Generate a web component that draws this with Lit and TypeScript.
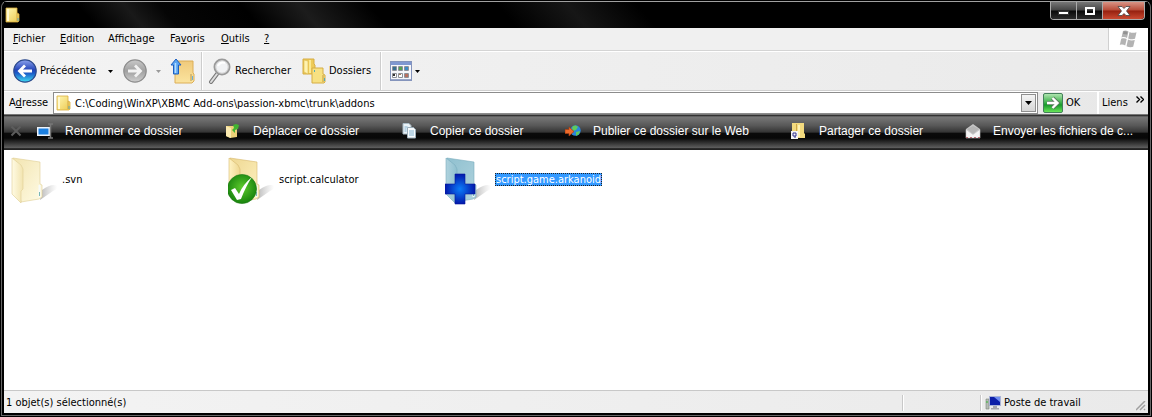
import { LitElement, html, css, svg, type TemplateResult } from "lit";
import { customElement } from "lit/decorators.js";

const folder = (size: number) => html`<svg width=${size} height=${size} viewBox="0 0 16 16" aria-hidden="true">
  <defs><linearGradient id="fy" x1="0" y1="0" x2="1" y2="1"><stop offset="0" stop-color="#fff8b4"/><stop offset="1" stop-color="#ecc94f"/></linearGradient></defs>
  <path d="M1 1h11v5l2 1v7l-1 1H1z" fill="url(#fy)" stroke="#d9ad3c" stroke-width=".8"/>
  <path d="M2 2h2v12H2z" fill="#fff9cf"/><path d="M12 6v8" stroke="#c99b35" stroke-width=".8"/>
  <path d="M13 11v3" stroke="#5aa7b8" stroke-width="1"/></svg>`;

const roundArrow = (dir: "back" | "next") => html`<svg width="24" height="24" viewBox="0 0 24 24" aria-hidden="true">
  <defs>
    <linearGradient id="bk" x1="0" y1="0" x2="0" y2="1"><stop offset="0" stop-color="#8ea4ee"/><stop offset=".45" stop-color="#2445b8"/><stop offset=".6" stop-color="#1b5cc8"/><stop offset="1" stop-color="#3fe0f4"/></linearGradient>
    <linearGradient id="nx" x1="0" y1="0" x2="0" y2="1"><stop offset="0" stop-color="#c9c9c9"/><stop offset=".5" stop-color="#a0a0a0"/><stop offset="1" stop-color="#cfcfcf"/></linearGradient>
  </defs>
  <circle cx="12" cy="12" r="11.2" fill=${dir === "back" ? "url(#bk)" : "url(#nx)"} stroke=${dir === "back" ? "#2d4a8c" : "#8d8d8d"} stroke-width="1.2"/>
  ${dir === "back"
    ? svg`<path d="M19 12H7M12 6.5L6.5 12l5.5 5.5" fill="none" stroke="#fff" stroke-width="2.8"/>`
    : svg`<path d="M5 12h12M12 6.5l5.5 5.5-5.5 5.5" fill="none" stroke="#f2f2f2" stroke-width="2.8"/>`}
</svg>`;

const upIcon = html`<svg width="26" height="26" viewBox="0 0 26 26" aria-hidden="true">
  <defs><linearGradient id="uf" x1="0" y1="0" x2="0" y2="1"><stop offset="0" stop-color="#f0ca7c"/><stop offset="1" stop-color="#fbe49f"/></linearGradient></defs>
  <path d="M5 3h18v12l1 1v7l-2 2H5z" fill="url(#uf)" stroke="#dcae57"/>
  <path d="M21 16v7" stroke="#b69a55"/><path d="M22.500 18v4" stroke="#6bb0d8"/>
  <path d="M6 1l5 6H8.500v9h-5V7H1z" fill="#5aa5f2" stroke="#1d5fc0"/><path d="M5.500 5v10" stroke="#b8defd" stroke-width="1.500"/></svg>`;

const searchIcon = html`<svg width="24" height="26" viewBox="0 0 24 26" aria-hidden="true">
  <path d="M9 16L3 24" stroke="#777" stroke-width="4" stroke-linecap="round"/><path d="M9 16L3 24" stroke="#dedede" stroke-width="2" stroke-linecap="round"/>
  <circle cx="14" cy="9" r="7.500" fill="#e9eaec" stroke="#9a9a9a" stroke-width="2"/>
  <circle cx="14" cy="9" r="6.300" fill="#f1f2f4" stroke="#c9c9c9"/><path d="M10 8c1-3 4-4 7-3" stroke="#fff" stroke-width="2" fill="none"/></svg>`;

const foldersIcon = html`<svg width="24" height="26" viewBox="0 0 24 26" aria-hidden="true">
  <path d="M1 1h11v5l1 1v8l-1 1H1z" fill="#eecb58" stroke="#d6ad45"/><path d="M2 2l4 1v13l-4-2z" fill="#fff3b0" stroke="#dcb94f" stroke-width=".6"/><path d="M8 2v13" stroke="#fbe992" stroke-width="2"/>
  <path d="M10 10h11v6l2 1v7l-1 1H10z" fill="#f7e182" stroke="#d6ad45"/><path d="M21 17v7" stroke="#c59c3b"/><path d="M22.500 20v3M12.500 12v2" stroke="#58aab5"/></svg>`;

const viewsIcon = html`<svg width="22" height="22" viewBox="0 0 22 22" aria-hidden="true">
  <rect x=".5" y="1.500" width="21" height="19" fill="#f6f7fb" stroke="#8494bc"/><path d="M1 2h20v3H1z" fill="#7f97d0"/>
  <path d="M1 19.500h20" stroke="#9aa7c9"/>
  <g fill="#fff" stroke="#8d9098"><path d="M2.500 6.500h4v4h-4zM8.500 6.500h4v4h-4zM14.500 6.500h4v4h-4zM2.500 13.500h4v4h-4zM8.500 13.500h4v4h-4zM14.500 13.500h4v4h-4z"/></g>
  <path d="M3 7h3v3H3z" fill="#386f91"/><path d="M9 7h3v3H9z" fill="#56a052"/><path d="M15 7h3v3h-3z" fill="#3f8ac2"/>
  <path d="M3 14h2v2H3z" fill="#333"/><path d="M9 14h2v1H9z" fill="#a87b5a"/><path d="M15 14h3v3h-3z" fill="#b9705f"/></svg>`;

const flagIcon = html`<svg width="20" height="18" viewBox="0 0 20 18" aria-hidden="true">
  <path d="M4 1c2-1 4-.5 5.500.5L8 8C6.500 7 4.500 6.800 2.500 7.500zM10.500 2c2 1 4 1.200 7 .2L16 8.800c-2 .8-4.500.6-6.800-.4zM2.200 8.800c2-.8 4-.6 5.500.3L6.200 15.500C4.500 14.500 2.800 14.300.8 15zM9 9.600c2 1 4.500 1.200 6.800.4L14.200 16.800c-2.200.8-4.700.4-6.700-.6z" fill="#b3b3b3"/>
  <path d="M4.500 1.500c1-.4 3-.2 4 .5L8 4.500 4 4z" fill="#929292"/></svg>`;

const goIcon = html`<svg width="20" height="20" viewBox="0 0 20 20" aria-hidden="true">
  <defs><linearGradient id="go" x1="0" y1="0" x2="0" y2="1"><stop offset="0" stop-color="#b5e8b4"/><stop offset=".5" stop-color="#35ad45"/><stop offset=".6" stop-color="#17982b"/><stop offset="1" stop-color="#6eea5c"/></linearGradient></defs>
  <rect x=".5" y=".5" width="19" height="19" rx="1.500" fill="url(#go)" stroke="#44805a"/>
  <path d="M4 10h10M9.500 5l5 5-5 5" fill="none" stroke="#58795c" stroke-width="4"/>
  <path d="M4 10h10M9.500 5l5 5-5 5" fill="none" stroke="#fff" stroke-width="2.400"/></svg>`;

const tones = {
  pale: ["#fffbe4", "#f2e4b0", "#dfce94"],
  gold: ["#fff3c4", "#eed791", "#d6b96e"],
  blue: ["#b0d3de", "#8fc0cf", "#7badbd"],
};

const bigFolder = (tone: keyof typeof tones, badge: TemplateResult | unknown) => {
  const [light, mid, edge] = tones[tone];
  return html`<svg width="48" height="50" viewBox="0 0 48 50" aria-hidden="true">
    <defs>
      <linearGradient id="face-${tone}" x1="0" y1="0" x2="1" y2="1"><stop offset="0" stop-color=${mid}/><stop offset="1" stop-color=${light}/></linearGradient>
      <linearGradient id="flap-${tone}" x1="0" y1="0" x2="1" y2="0"><stop offset="0" stop-color=${light}/><stop offset="1" stop-color=${mid}/></linearGradient>
      <linearGradient id="shade" x1="0" y1="0" x2="1" y2="0"><stop offset="0" stop-color="#888" stop-opacity=".6"/><stop offset="1" stop-color="#aaa" stop-opacity="0"/></linearGradient>
      <radialGradient id="ok" cx=".5" cy=".45" r=".6"><stop offset="0" stop-color="#5ecb2d"/><stop offset="1" stop-color="#107c0a"/></radialGradient>
      <radialGradient id="plus" gradientUnits="userSpaceOnUse" cx="15" cy="33" r="16"><stop offset="0" stop-color="#0c7cf8"/><stop offset="1" stop-color="#0212a6"/></radialGradient>
    </defs>
    <path d="M29 44l13-9c3-1 5-3 4-5-3-2-8-1-15 4z" fill="url(#shade)"/>
    <path d="M2 2l27 4v22l2 1v12l-3 2-18 3z" fill="url(#face-${tone})" stroke=${edge} stroke-width=".6"/>
    <path d="M1 2l9 7 2 4v20l-2 2v12l-9-9z" fill="url(#flap-${tone})" stroke=${edge} stroke-width=".6"/>
    <path d="M28.500 29v12" stroke="#f7fbfa" stroke-width="2"/><path d="M28.500 36v4" stroke="#7ab8b5"/>
    ${badge}
  </svg>`;
};

const okBadge = svg`<circle cx="14" cy="33" r="14.600" fill="url(#ok)" stroke="#1d7a14" stroke-width=".6"/>
  <path d="M3 34l4-2 4 6c3-7 7-12 13-17-4 6-8 14-11 22l-4 1z" fill="#fff"/>`;
const plusBadge = svg`<path d="M10 18h10v10h10v10H20v10H10V38H0V28h10z" fill="url(#plus)" stroke="#07189c" stroke-width=".6"/>`;

const taskIcons = {
  rename: svg`<path d="M0 4h13v9H0z" fill="#eef4fb"/><path d="M1.500 5.500h10v6h-10z" fill="#1b7fe0"/><path d="M11 1h5M11 15h5M13.500 1v14" stroke="#777" stroke-width="1.500"/>`,
  move: svg`<path d="M1 3h8l3 2v9l-7 1-4-2z" fill="#ecd078"/><path d="M1 3l5 2v10l-5-2z" fill="#fbeab0"/><path d="M7 7l2-2-1-3 3-1 3 1-1 4-3 1v3z" fill="#42b431"/>`,
  copy: svg`<path d="M1 .5h6l2 2V11H1z" fill="#e9f1f6" stroke="#a9bac4"/><path d="M5.500 4.500h6l2 2V15h-8z" fill="#f7fbfd" stroke="#9badb9"/><path d="M7 8h5M7 10h5M7 12h5M2.500 4h3M2.500 6h2M2.500 8h2" stroke="#82b2cf"/>`,
  publish: svg`<circle cx="10.500" cy="7.500" r="5.200" fill="#2a86dc"/><path d="M8 3c2-1 4-.5 5 1l-2 3-3 1-1-3zM11 9l4-1-1 3-3 2z" fill="#5fcb5a"/><path d="M0 6.500h4V4l5 4.500L4 13v-2.500H0z" fill="#ee6b2a" stroke="#a83e12" stroke-width=".7"/>`,
  share: svg`<path d="M1 0h12v10l1 1v4H1z" fill="#f3da7e"/><path d="M5.500 1v13" stroke="#cda747"/><path d="M8 2v12" stroke="#fff2b4" stroke-width="2"/><path d="M0 8h7v8H0z" fill="#f5f5f5"/><path d="M2 10h3v3H2zM3 14h2" fill="none" stroke="#33338d"/>`,
  send: svg`<path d="M1 6l7-5 7 5v9H1z" fill="#c6c6c6"/><path d="M2 6l6-3 6 3-6 5z" fill="#b5b5b5"/><path d="M1 6.500l7 5 7-5V15H1z" fill="#f4f4f4" stroke="#c4c4c4" stroke-width=".6"/><path d="M1 14.500h14" stroke="#b76a72" stroke-dasharray="2 2"/>`,
};

const tasks: [keyof typeof taskIcons, string][] = [
  ["rename", "Renommer ce dossier"],
  ["move", "Déplacer ce dossier"],
  ["copy", "Copier ce dossier"],
  ["publish", "Publier ce dossier sur le Web"],
  ["share", "Partager ce dossier"],
  ["send", "Envoyer les fichiers de c..."],
];

const menus = [
  ["", "F", "ichier"],
  ["", "E", "dition"],
  ["Affic", "h", "age"],
  ["Fa", "v", "oris"],
  ["", "O", "utils"],
  ["", "?", ""],
];

@customElement("app-root")
export class AppRoot extends LitElement {
  static styles = css`
    :host { display: block; background: #000; }
    * { box-sizing: border-box; }
    svg { display: block; flex: none; }
    button, input { font: inherit; color: inherit; margin: 0; padding: 0; border: 0; background: none; text-align: left; white-space: nowrap; }
    .window {
      min-height: 100vh; display: flex; flex-direction: column; border: 1px solid #000; background: #000;
      font: 11px/14px "DejaVu Sans Condensed", "Noto Sans", sans-serif; color: #000;
    }
    .frame { flex: 1; display: flex; flex-direction: column; border: 1px solid #666; border-top-color: #a0a0a0; border-radius: 6px 6px 0 0; padding: 0 2px 2px; }
    .title {
      height: 26px; display: flex; justify-content: space-between; padding-left: 1px;
      background: linear-gradient(50deg, #000 8%, #191919 12%, #050505 15%, #000 22%, #1c1c1c 27%, #000 33%, #000 44%, #161616 50%, #000 56%);
    }
    .title > svg { margin-top: 5px; }
    .caption { display: flex; height: 18px; margin-right: 3px; border: 1px solid #aaa; border-top: 0; border-radius: 0 0 4px 4px; overflow: hidden; }
    .cap { width: 26px; display: grid; place-items: center; border-right: 1px solid #aaa; background: linear-gradient(#777 0, #444 48%, #080808 52%, #2c2c2c 100%); }
    .close { width: 41px; border-right: 0; background: linear-gradient(#d99485 0, #b84b38 48%, #95200f 52%, #ca4931 100%); }
    .menubar { height: 23px; display: flex; justify-content: space-between; background: #f0f0f0; border-bottom: 1px solid #d4d4d4; }
    .menus { display: grid; grid-template-columns: 47px 48px 62px 51px 43px 20px; padding-left: 9px; align-items: center; }
    .flag { width: 40px; display: grid; place-items: center; background: #fff; border-left: 1px solid #d0d0d0; }
    .toolbar { height: 40px; display: flex; align-items: center; background: linear-gradient(90deg, #f3f3f3, #eaeaea); border-top: 1px solid #fff; border-bottom: 1px solid #cfcfcf; padding-left: 9px; }
    .tool { display: flex; align-items: center; height: 26px; }
    .back { gap: 3px; width: 84px; }
    .arrow { width: 26px; display: grid; place-items: center; }
    .next { width: 24px; }
    .arrow:disabled { width: 23px; }
    .up { width: 31px; }
    .sep { width: 2px; height: 38px; background: #cdcdcd; border-right: 1px solid #fff; }
    .search { gap: 3px; width: 99px; padding-left: 5px; }
    .folders { gap: 3px; width: 78px; }
    .views { padding-left: 8px; }
    .views .arrow { width: 10px; }
    .address { height: 24px; display: flex; align-items: center; background: linear-gradient(90deg, #f3f3f3, #e8e8e8); border-top: 1px solid #fff; border-bottom: 1px solid #777; padding-left: 5px; }
    .address label { width: 44px; }
    .combo { flex: 1; height: 22px; display: flex; align-items: center; background: #fff; border: 1px solid #8c8c8c; padding: 1px 1px 1px 2px; }
    .combo input { flex: 1; min-width: 0; height: 18px; padding: 1px 0 0 3px; outline: 0; }
    .drop { width: 15px; height: 18px; display: grid; place-items: center; background: linear-gradient(#f4f4f4, #d6d6d6); border: 1px solid #8f8f8f; }
    .go { display: flex; align-items: center; gap: 3px; width: 59px; padding-left: 5px; }
    .links { display: flex; align-items: center; height: 22px; width: 51px; border-left: 2px solid #fff; padding-left: 3px; justify-content: space-between; }
    .links svg { margin: 0 4px 8px 0; }
    .tasks {
      height: 35px; display: grid; grid-template-columns: 33px 188px 177px 163px 226px 174px minmax(0, 1fr); align-items: center; padding-bottom: 3px;
      background: linear-gradient(#333 0, #333 3%, #787878 5%, #585858 30%, #343434 49%, #0a0a0a 52%, #080808 66%, #5e5e5e 94%, #222 96%, #222 100%);
      font: 12px/16px "Liberation Sans", Arial, sans-serif; color: #fff;
    }
    .task { display: flex; align-items: center; gap: 12px; min-width: 0; }
    .dismiss { padding-left: 6px; }
    .files { flex: 1; background: #fff; display: grid; grid-template-columns: repeat(auto-fill, 217px); align-content: start; padding: 6px 0 0 7px; }
    .file { display: flex; align-items: center; gap: 2px; height: 50px; }
    .name { padding: 0 1px; margin-bottom: 3px; line-height: 13px; }
    .selected { background: #3399ff; color: #fff; outline: 1px dotted #222; outline-offset: -1px; }
    .status { height: 23px; display: flex; align-items: center; background: linear-gradient(90deg, #f3f3f3, #eaeaea); border-top: 1px solid #c8c8c8; padding: 2px 0 0 2px; }
    .count { flex: 1; }
    .cell { height: 16px; border-left: 1px solid #c8c8c8; box-shadow: inset 1px 0 #fff; }
    .blank { width: 78px; }
    .zone { width: 156px; display: flex; align-items: center; gap: 3px; padding-left: 4px; }
    .grip { align-self: flex-end; }
  `;

  render() {
    const down = (fill: string) => html`<svg width="5" height="3" viewBox="0 0 5 3" aria-hidden="true"><path d="M0 0h5L2.500 3z" fill=${fill}/></svg>`;
    return html`<div class="window"><div class="frame">
      <header class="title">
        ${folder(16)}
        <div class="caption">
          <button class="cap" aria-label="Réduire"><svg width="12" height="12" viewBox="0 0 12 12"><path d="M.5 6.500h10v3H.5z" fill="#fff" stroke="#333"/></svg></button>
          <button class="cap" aria-label="Agrandir"><svg width="12" height="12" viewBox="0 0 12 12"><path d="M2 3h8v6H2z" fill="none" stroke="#fff" stroke-width="2"/></svg></button>
          <button class="cap close" aria-label="Fermer"><svg width="14" height="12" viewBox="0 0 14 12"><path d="M1 1.500h4l2 2 2-2h4L9.500 6l3.500 4.500H9l-2-2-2 2H1L4.500 6z" fill="#fff" stroke="#444" stroke-width=".8"/></svg></button>
        </div>
      </header>
      <nav class="menubar">
        <div class="menus">${menus.map(([a, k, b]) => html`<button>${a}<u>${k}</u>${b}</button>`)}</div>
        <div class="flag">${flagIcon}</div>
      </nav>
      <div class="toolbar">
        <button class="tool back">${roundArrow("back")}Précédente</button>
        <button class="arrow" aria-label="Historique précédent">${down("#000")}</button>
        <button class="tool next" disabled aria-label="Suivante">${roundArrow("next")}</button>
        <button class="arrow" disabled aria-label="Historique suivant">${down("#999")}</button>
        <button class="tool up" aria-label="Dossier parent">${upIcon}</button>
        <span class="sep"></span>
        <button class="tool search">${searchIcon}Rechercher</button>
        <button class="tool folders">${foldersIcon}Dossiers</button>
        <span class="sep"></span>
        <button class="tool views" aria-label="Affichages">${viewsIcon}<span class="arrow">${down("#000")}</span></button>
      </div>
      <div class="address">
        <label for="path">A<u>d</u>resse</label>
        <div class="combo">
          ${folder(16)}
          <input id="path" type="text" value="C:\\Coding\\WinXP\\XBMC Add-ons\\passion-xbmc\\trunk\\addons" />
          <button class="drop" aria-label="Ouvrir la liste"><svg width="7" height="4" viewBox="0 0 7 4"><path d="M0 0h7L3.500 4z"/></svg></button>
        </div>
        <button class="go">${goIcon}OK</button>
        <button class="links">Liens<svg width="8" height="7" viewBox="0 0 8 7"><path d="M.5.500l3 3-3 3M4.500.500l3 3-3 3" fill="none" stroke="#000" stroke-width="1.400"/></svg></button>
      </div>
      <div class="tasks">
        <button class="dismiss" aria-label="Fermer le volet"><svg width="12" height="12" viewBox="0 0 12 12"><path d="M1.500 1.500l9 9M10.500 1.500l-9 9" stroke="#5c5c5c" stroke-width="2"/></svg></button>
        ${tasks.map(([icon, text]) => html`<button class="task"><svg width="16" height="16" viewBox="0 0 16 16" aria-hidden="true">${taskIcons[icon]}</svg>${text}</button>`)}
      </div>
      <main class="files">
        <div class="file">${bigFolder("pale", "")}<span class="name">.svn</span></div>
        <div class="file">${bigFolder("gold", okBadge)}<span class="name">script.calculator</span></div>
        <div class="file">${bigFolder("blue", plusBadge)}<span class="name selected">script.game.arkanoid</span></div>
      </main>
      <footer class="status">
        <span class="count">1 objet(s) sélectionné(s)</span>
        <span class="cell blank"></span>
        <span class="cell zone"><svg width="16" height="16" viewBox="0 0 16 16" aria-hidden="true"><path d="M1 4h3v10H1z" fill="#b5bcb5" stroke="#7b847b" stroke-width=".6"/><path d="M2 6v2" stroke="#37b837"/><path d="M4.500 1.500h11v9h-11z" fill="#0d1fa8" stroke="#a9b3d6"/><path d="M9 2h6v5z" fill="#6e8df0"/><path d="M8 11h4v2h2v1.500H6V13h2z" fill="#a6a6ae"/></svg>Poste de travail</span>
        <svg class="grip" width="12" height="12" viewBox="0 0 12 12" aria-hidden="true"><path d="M0 9L9 0M4 9l5-5M8 9l1-1" stroke="#a0a0a0" stroke-width="1.500"/></svg>
      </footer>
    </div></div>`;
  }
}
